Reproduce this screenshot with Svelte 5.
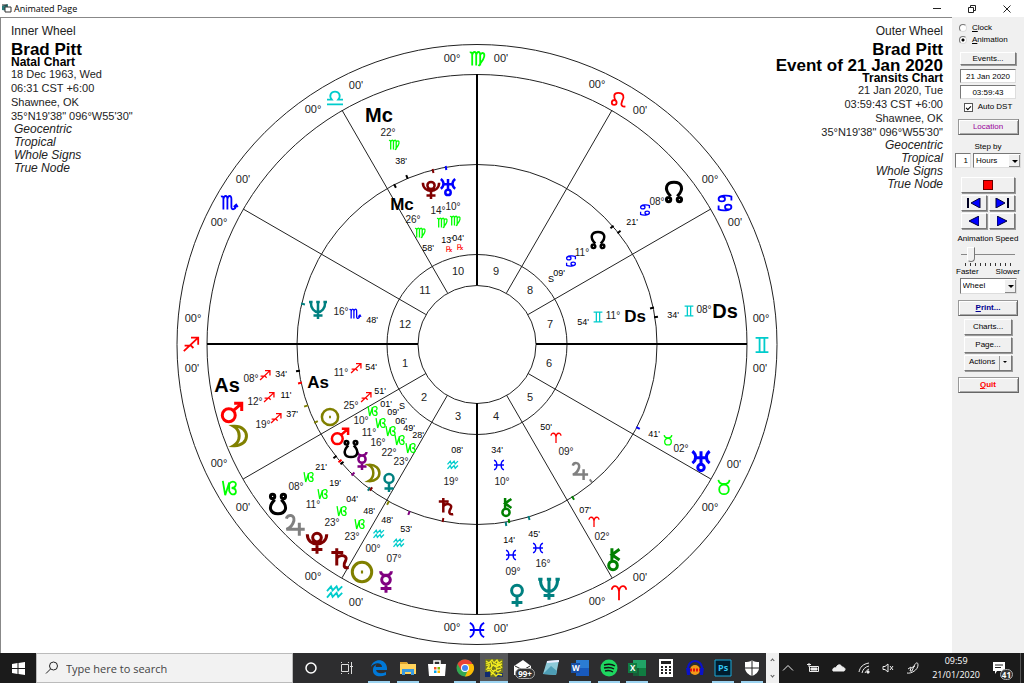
<script>
  // side panel state
  let mode = "animation";
  let date = "21 Jan 2020";
  let time = "03:59:43";
  let autoDst = true;
  let step = "1";
  let unit = "Hours";
  let speed = 14;
  let view = "Wheel";

  const CX = 477;
  const CY = 344;
  const rings = [300, 270, 180, 90, 59];

  const RED = "#ff0000";
  const LIME = "#00ff00";
  const AQUA = "#00cccc";
  const BLUE = "#0000ff";
  const TEAL = "#008080";
  const OLIVE = "#808000";
  const MAROON = "#800000";
  const PURPLE = "#800080";
  const GRAY = "#808080";
  const GREEN = "#008000";
  const BLACK = "#000000";

  // every glyph is drawn in a -10..10 box
  const glyphs = {
    aries: "M-9 -4C-9 -10 -1 -11 0 -2V9M9 -4C9 -10 1 -11 0 -2",
    taurus: "M-7 -9C-6 -2 6 -2 7 -9M6 3A6 6 0 1 1 -6 3A6 6 0 1 1 6 3",
    gemini: "M-8 -9H8M-8 9H8M-3 -9V9M3 -9V9",
    cancer: "M-8 -5C-8 -10 4 -10 8 -8V-3M-8 -5A4 3 0 1 0 0 -5A4 3 0 1 0 -8 -5M8 5C8 10 -4 10 -8 8V3M8 5A4 3 0 1 0 0 5A4 3 0 1 0 8 5",
    leo: "M-3 3A3 3 0 1 1 -9 3A3 3 0 1 1 -3 3M-4 1C-7 -4 -7 -9 -1 -9C6 -9 7 -4 4 1C2 6 3 9 8 8",
    virgo: "M-9 -8C-7 -9 -6 -8 -6 -5V8M-6 -5C-5 -10 -1 -10 -1 -5V8M-1 -5C0 -10 4 -10 4 -5V8M4 -5C6 -9 10 -8 9 -3C8 2 4 5 2 9",
    libra: "M-10 8H10M-10 2H-4C-8 -3 -5 -8 0 -8C5 -8 8 -3 4 2H10",
    scorpio: "M-10 -8C-8 -9 -7 -8 -7 -5V8M-7 -5C-6 -10 -2 -10 -2 -5V8M-2 -5C-1 -10 3 -10 3 -5V5C3 9 8 9 9 3M6 5L9 2L11 5",
    sagittarius: "M-9 9L9 -8M0 -8H9V1M-8 2H0L3 5",
    capricorn: "M-9 -9L-6 9L-1 -7V4M-1 -5C2 -10 9 -8 7 -3C6 0 3 0 2 0C9 0 9 9 3 8C1 8 0 6 -1 4",
    aquarius: "M-10 -1L-5 -7L-3 -2L2 -7L4 -2L9 -7M-10 7L-5 1L-3 6L2 1L4 6L9 1",
    pisces: "M-9 -9C-2 -6 -2 6 -9 9M9 -9C2 -6 2 6 9 9M-9 0H9",
    sun: "M9 0A9 9 0 1 1 -9 0A9 9 0 1 1 9 0M-1 0H1",
    moon: "M-6 -9C10 -10 10 10 -6 9C1 5 1 -5 -6 -9Z",
    mercury: "M4 -2A4 4 0 1 1 -4 -2A4 4 0 1 1 4 -2M-5 -10C-5 -5 5 -5 5 -10M0 2V10M-5 6H5",
    venus: "M5 -5A5 5 0 1 1 -5 -5A5 5 0 1 1 5 -5M0 0V10M-5 6H5",
    mars: "M3 3A6 6 0 1 1 -9 3A6 6 0 1 1 3 3M1 -1L9 -8M2 -8H9V-1",
    jupiter: "M-8 -6C-7 -10 0 -10 -1 -4C-2 0 -5 3 -8 4H9M4 -2V10",
    saturn: "M-3 -10V6M-8 -6H3M-3 -1C1 -5 8 -3 5 2C3 5 3 9 8 8",
    uranus: "M-8 -9C-4 -6 -4 -1 -8 2M8 -9C4 -6 4 -1 8 2M-5 -3H5M0 -9V3M3 6A3 3 0 1 1 -3 6A3 3 0 1 1 3 6",
    neptune: "M-8 -9C-8 6 8 6 8 -9M-10 -9H-6M6 -9H10M0 -9V10M-5 6H5M-2 -9H2",
    pluto: "M4 -5A4 4 0 1 1 -4 -5A4 4 0 1 1 4 -5M-9 -8C-9 4 9 4 9 -8M0 1V10M-5 6H5",
    chiron: "M4 6A4 4 0 1 1 -4 6A4 4 0 1 1 4 6M-1 -10V2M6 -9L-1 -4L6 1",
    node: "M-3 4C-10 -3 -7 -9 0 -9C7 -9 10 -3 3 4M-3 7A2 2 0 1 1 -7 7A2 2 0 1 1 -3 7M7 7A2 2 0 1 1 3 7A2 2 0 1 1 7 7",
    southnode: "M-3 -4C-10 3 -7 9 0 9C7 9 10 3 3 -4M-3 -7A2 2 0 1 1 -7 -7A2 2 0 1 1 -3 -7M7 -7A2 2 0 1 1 3 -7A2 2 0 1 1 7 -7"
  };

  const signColors = {
    aries: RED, leo: RED, sagittarius: RED,
    taurus: LIME, virgo: LIME, capricorn: LIME,
    gemini: AQUA, libra: AQUA, aquarius: AQUA,
    cancer: BLUE, scorpio: BLUE, pisces: BLUE
  };

  // sign, its place, the place of 00 degrees and of 00 minutes
  const cusps = [
    ["virgo", 477, 59, 452, 58, 501, 58],
    ["libra", 335, 98, 313, 109, 356, 85],
    ["scorpio", 229, 203, 219, 222, 243, 179],
    ["sagittarius", 191, 344, 193, 318, 192, 368],
    ["capricorn", 230, 488, 219, 463, 243, 507],
    ["aquarius", 335, 592, 313, 576, 356, 602],
    ["pisces", 477, 630, 452, 627, 501, 628],
    ["aries", 619, 593, 597, 601, 640, 577],
    ["taurus", 724, 487, 710, 507, 734, 464],
    ["gemini", 762, 345, 761, 318, 760, 368],
    ["cancer", 725, 203, 710, 179, 735, 222],
    ["leo", 619, 100, 597, 84, 640, 110]
  ];

  const houses = [
    [405, 363], [424, 397], [458, 416], [496, 416], [530, 397], [549, 363],
    [550, 324], [530, 290], [496, 271], [458, 271], [425, 290], [405, 324]
  ];

  // body, colour, x, y, degrees, x, y, sign, x, y, minutes, x, y
  const outer = [
    ["Mc", BLACK, 379, 115, "22", 388, 132, "virgo", 394, 145, "38", 401, 161],
    ["node", BLACK, 674, 192, "08", 657, 201, "cancer", 645, 210, "21", 632, 222],
    ["Ds", BLACK, 725, 311, "08", 704, 309, "gemini", 689, 311, "34", 673, 315],
    ["uranus", BLUE, 701, 461, "02", 681, 448, "taurus", 668, 440, "41", 654, 434],
    ["chiron", GREEN, 613, 559, "02", 602, 536, "aries", 594, 522, "07", 585, 510],
    ["neptune", TEAL, 549, 589, "16", 543, 563, "pisces", 538, 548, "45", 534, 534],
    ["venus", TEAL, 517, 596, "09", 513, 571, "pisces", 511, 555, "14", 509, 540],
    ["mercury", PURPLE, 386, 582, "07", 394, 558, "aquarius", 399, 543, "53", 406, 529],
    ["sun", OLIVE, 362, 572, "00", 373, 548, "aquarius", 379, 534, "48", 387, 520],
    ["saturn", MAROON, 340, 559, "23", 352, 536, "capricorn", 360, 524, "48", 369, 511],
    ["pluto", MAROON, 317, 543, "23", 332, 522, "capricorn", 342, 511, "04", 352, 499],
    ["jupiter", GRAY, 295, 525, "11", 313, 504, "capricorn", 323, 494, "19", 335, 483],
    ["southnode", BLACK, 278, 504, "08", 296, 486, "capricorn", 309, 477, "21", 321, 467],
    ["moon", OLIVE, 240, 436, "19", 263, 424, "sagittarius", 276, 418, "37", 292, 414],
    ["mars", RED, 232, 412, "12", 255, 401, "sagittarius", 269, 397, "11", 286, 395],
    ["As", BLACK, 227, 385, "08", 251, 378, "sagittarius", 265, 375, "34", 281, 374]
  ];

  const inner = [
    ["Mc", BLACK, 402, 203, "26", 413, 219, "virgo", 420, 233, "58", 428, 248],
    ["pluto", MAROON, 431, 190, "14", 438, 210, "virgo", 442, 223, "13", 447, 240],
    ["uranus", BLUE, 448, 187, "10", 453, 206, "virgo", 455, 221, "04", 458, 238],
    ["node", BLACK, 598, 240, "11", 582, 252, "cancer", 571, 261, "09", 559, 273],
    ["Ds", BLACK, 635, 315, "11", 613, 315, "gemini", 598, 317, "54", 583, 322],
    ["jupiter", GRAY, 580, 471, "09", 566, 451, "aries", 556, 438, "50", 546, 427],
    ["chiron", GREEN, 506, 507, "10", 502, 481, "pisces", 499, 465, "34", 497, 450],
    ["saturn", MAROON, 446, 507, "19", 451, 481, "aquarius", 453, 465, "08", 457, 450],
    ["venus", TEAL, 389, 483, "23", 401, 461, "capricorn", 411, 448, "28", 418, 435],
    ["moon", OLIVE, 374, 473, "22", 389, 452, "capricorn", 400, 440, "49", 409, 428],
    ["mercury", PURPLE, 362, 461, "16", 378, 442, "capricorn", 391, 431, "06", 401, 421],
    ["southnode", BLACK, 351, 449, "11", 369, 432, "capricorn", 381, 423, "09", 393, 412],
    ["mars", RED, 340, 436, "10", 361, 420, "capricorn", 373, 411, "01", 386, 404],
    ["sun", OLIVE, 330, 417, "25", 351, 405, "sagittarius", 366, 397, "51", 380, 391],
    ["As", BLACK, 318, 381, "11", 341, 372, "sagittarius", 356, 368, "54", 371, 367],
    ["neptune", TEAL, 318, 310, "16", 341, 311, "scorpio", 355, 314, "48", 372, 320]
  ];

  const wheels = [
    { name: "outer", bodies: outer, scale: 1.08 },
    { name: "inner", bodies: inner, scale: 0.9 }
  ];

  const marks = [
    [407, 177, BLACK], [395, 186, BLACK], [433, 171, MAROON], [446, 168, BLUE],
    [612, 227, BLACK], [619, 232, BLACK], [652, 308, BLACK], [656, 317, BLACK],
    [638, 428, BLUE], [591, 481, GRAY], [573, 498, GREEN], [529, 518, TEAL],
    [509, 521, GREEN], [506, 524, TEAL], [443, 520, MAROON], [409, 513, PURPLE],
    [388, 503, OLIVE], [369, 489, TEAL], [371, 489, MAROON], [353, 474, PURPLE],
    [340, 461, RED], [342, 463, BLACK], [335, 457, BLACK], [316, 422, OLIVE],
    [306, 406, OLIVE], [300, 383, RED], [298, 371, BLACK], [303, 304, TEAL]
  ];

  const spokes = [];
  for (let i = 0; i < 12; i++) {
    const a = (i * Math.PI) / 6;
    spokes.push({
      x1: CX + 59 * Math.cos(a),
      y1: CY + 59 * Math.sin(a),
      x2: CX + 270 * Math.cos(a),
      y2: CY + 270 * Math.sin(a),
      axis: i % 3 === 0
    });
  }

  const ticks = marks.map(([x, y, color]) => {
    const r = Math.hypot(x - CX, y - CY);
    const dx = ((x - CX) / r) * 2;
    const dy = ((y - CY) / r) * 2;
    return { x1: x - dx, y1: y - dy, x2: x + dx, y2: y + dy, color };
  });

  const apps = [
    { name: "Edge", open: true },
    { name: "Explorer", open: true },
    { name: "Store" },
    { name: "Chrome", open: true },
    { name: "Astrology", open: true, active: true },
    { name: "Mail" },
    { name: "Notes" },
    { name: "Word", open: true },
    { name: "Spotify", open: true },
    { name: "Excel", open: true },
    { name: "Calculator" },
    { name: "Audacity" },
    { name: "Photoshop", open: true },
    { name: "Security", open: true }
  ];
</script>

<div class="window">
  <header class="titlebar">
    <svg width="10" height="9" viewBox="0 0 10 9">
      <path d="M0 2L6 0V7L0 6Z" fill="#2a7a7a" />
      <path d="M3 3H9V8H3Z" fill="#fff" stroke="#333" />
      <path d="M0 1H5" stroke="#222" />
    </svg>
    <span class="caption">Animated Page</span>
    <div class="frame-buttons">
      <button aria-label="Minimize"><svg width="10" height="10"><path d="M1 4.500H9" /></svg></button>
      <button aria-label="Restore"><svg width="10" height="10"><path d="M1.500 3.500H6.500V8.500H1.500ZM3.500 3.500V1.500H8.500V6.500H6.500" /></svg></button>
      <button aria-label="Close"><svg width="10" height="10"><path d="M1.500 1.500L8.500 8.500M8.500 1.500L1.500 8.500" /></svg></button>
    </div>
  </header>

  <main>
    <section class="page">
      <div class="info">
        <p>Inner Wheel</p>
        <h2>Brad Pitt</h2>
        <h3>Natal Chart</h3>
        <p class="data">18 Dec 1963, Wed</p>
        <p class="data">06:31 CST +6:00</p>
        <p class="data">Shawnee, OK</p>
        <p class="data">35°N19'38" 096°W55'30"</p>
        <p class="setting">Geocentric</p>
        <p class="setting">Tropical</p>
        <p class="setting">Whole Signs</p>
        <p class="setting">True Node</p>
      </div>

      <svg class="wheel" viewBox="176 43 602 602">
        {#each rings as r}
          <circle class="ring" cx={CX} cy={CY + 0.5} {r} />
        {/each}
        {#each spokes as s}
          <line class="spoke" class:axis={s.axis} x1={s.x1} y1={s.y1} x2={s.x2} y2={s.y2} />
        {/each}
        {#each ticks as t}
          <line class="tick" x1={t.x1} y1={t.y1} x2={t.x2} y2={t.y2} stroke={t.color} />
        {/each}

        {#each cusps as [sign, x, y, dx, dy, mx, my]}
          <path class="sign" d={glyphs[sign]} transform="translate({x} {y}) scale(0.8)" stroke={signColors[sign]} />
          <text class="cusp" x={dx} y={dy + 4}>00°</text>
          <text class="cusp" x={mx} y={my + 4}>00'</text>
        {/each}

        {#each houses as [x, y], i}
          <text class="house" {x} y={y + 4}>{i + 1}</text>
        {/each}

        {#each wheels as wheel}
          {#each wheel.bodies as [body, color, x, y, deg, dx, dy, sign, sx, sy, min, mx, my]}
            {#if glyphs[body]}
              <path class="body {wheel.name}" d={glyphs[body]} transform="translate({x} {y}) scale({wheel.scale})" stroke={color} />
            {:else}
              <text class="angle {wheel.name}" {x} y={y + 7}>{body}</text>
            {/if}
            <text class="degree" x={dx} y={dy + 4}>{deg}°</text>
            <path class="small-sign" d={glyphs[sign]} transform="translate({sx} {sy}) scale(0.55)" stroke={signColors[sign]} />
            <text class="minute" x={mx} y={my + 3}>{min}'</text>
          {/each}
        {/each}

        <text class="retro" x="449" y="252">℞</text>
        <text class="retro" x="460" y="250">℞</text>
        <text class="minute" x="551" y="282">S</text>
        <text class="minute" x="402" y="409">S</text>
      </svg>

      <div class="info right">
        <p>Outer Wheel</p>
        <h2>Brad Pitt</h2>
        <h2>Event of 21 Jan 2020</h2>
        <h3>Transits Chart</h3>
        <p class="data">21 Jan 2020, Tue</p>
        <p class="data">03:59:43 CST +6:00</p>
        <p class="data">Shawnee, OK</p>
        <p class="data">35°N19'38" 096°W55'30"</p>
        <p class="setting">Geocentric</p>
        <p class="setting">Tropical</p>
        <p class="setting">Whole Signs</p>
        <p class="setting">True Node</p>
      </div>
    </section>

    <aside>
      <div class="modes">
        <label><input type="radio" bind:group={mode} value="clock" /><span><u>C</u>lock</span></label>
        <label><input type="radio" bind:group={mode} value="animation" /><span><u>A</u>nimation</span></label>
      </div>
      <button class="events">Events...</button>
      <div class="moment">
        <input type="text" aria-label="Date" bind:value={date} />
        <input type="text" aria-label="Time" bind:value={time} />
      </div>
      <label class="dst"><input type="checkbox" bind:checked={autoDst} /><span>Auto DST</span></label>
      <button class="location framed">Location</button>
      <label class="step-label" for="step">Step by</label>
      <div class="step">
        <input id="step" type="text" bind:value={step} />
        <div class="select">
          <select aria-label="Step unit" bind:value={unit}>
            <option>Hours</option>
            <option>Days</option>
          </select>
          <span class="drop"></span>
        </div>
      </div>

      <div class="player">
        <button class="stop" aria-label="Stop"><svg width="10" height="10"><rect x="0.500" y="0.500" width="9" height="9" fill="#f00" stroke="#600" /></svg></button>
        <button aria-label="First"><svg width="14" height="10"><path d="M1 0V10" stroke="#002" stroke-width="2" /><path d="M13 0V10L4 5Z" fill="#00f" stroke="#003" /></svg></button>
        <button aria-label="Last"><svg width="14" height="10"><path d="M13 0V10" stroke="#002" stroke-width="2" /><path d="M1 0V10L10 5Z" fill="#00f" stroke="#003" /></svg></button>
        <button aria-label="Backward"><svg width="10" height="10"><path d="M10 0V10L0 5Z" fill="#00f" stroke="#003" /></svg></button>
        <button aria-label="Forward"><svg width="10" height="10"><path d="M0 0V10L10 5Z" fill="#00f" stroke="#003" /></svg></button>
      </div>

      <label class="speed-label" for="speed">Animation Speed</label>
      <input id="speed" class="speed" type="range" min="0" max="100" bind:value={speed} />
      <div class="notches"></div>
      <div class="ends"><span>Faster</span><span>Slower</span></div>
      <div class="select view">
        <select aria-label="View" bind:value={view}>
          <option>Wheel</option>
          <option>Page</option>
        </select>
        <span class="drop"></span>
      </div>

      <button class="print framed"><u>P</u>rint...</button>
      <div class="menu">
        <button>Charts...</button>
        <button>Page...</button>
        <button class="actions"><span>Actions</span><i></i></button>
      </div>
      <button class="quit framed"><u>Q</u>uit</button>
    </aside>
  </main>

  <footer>
    <button class="start" aria-label="Start">
      <svg width="13" height="13" viewBox="0 0 13 13" fill="#fff">
        <path d="M0 2L5.500 1V6H0ZM6.500 1L13 0V6H6.500ZM0 7H5.500V12L0 11ZM6.500 7H13V13L6.500 12Z" />
      </svg>
    </button>
    <label class="search">
      <svg width="14" height="14" viewBox="0 0 14 14" fill="none" stroke="#222">
        <circle cx="8.500" cy="5" r="4" /><path d="M5.500 8L1 12.500" />
      </svg>
      <input type="text" placeholder="Type here to search" />
    </label>
    <nav>
      <button class="wide" aria-label="Cortana"><svg width="16" height="16"><circle cx="8" cy="8" r="5" fill="none" stroke="#fff" stroke-width="1.500" /></svg></button>
      <button class="wide" aria-label="Task view">
        <svg width="16" height="16" fill="none" stroke="#ddd"><path d="M2.500 4.500H9.500V11.500H2.500ZM2.500 2V3M9.500 2V3M2.500 13V14M9.500 13V14M12.500 2V14M11 6.500H14" /></svg>
      </button>
      {#each apps as app}
        <button class:open={app.open} class:active={app.active} aria-label={app.name}>
          <svg width="18" height="18" viewBox="0 0 18 18">
            {#if app.name === "Edge"}
              <path d="M1 8C3 -1 16 -1 17 9V11H6C7 15 12 15 16 13V16C9 19 2 17 3 10C3 8 5 6 7 5C6 6 5 7 6 8H12C12 3 4 3 1 8Z" fill="#0078d7" />
            {:else if app.name === "Explorer"}
              <path d="M1 3H8L9 5H17V15H1Z" fill="#ffd35c" /><path d="M1 3H8V5H1Z" fill="#dca32c" /><path d="M3 16V10H15V16H12V13H6V16Z" fill="#3a9be0" />
            {:else if app.name === "Store"}
              <path d="M0 5H18L17 17H1Z" fill="#fff" /><path d="M6 6V2H12V6" fill="none" stroke="#fff" stroke-width="1.500" />
              <path d="M6 8H8.500V10.500H6Z" fill="#f25022" /><path d="M9.500 8H12V10.500H9.500Z" fill="#7fba00" /><path d="M6 11.500H8.500V14H6Z" fill="#00a4ef" /><path d="M9.500 11.500H12V14H9.500Z" fill="#ffb900" />
            {:else if app.name === "Chrome"}
              <circle cx="9" cy="9" r="8.500" fill="#33a852" /><path d="M1.500 5A8.500 8.500 0 0 1 17 6H9L5 11Z" fill="#ea4335" /><path d="M9 5H17A8.500 8.500 0 0 1 9 17.500L12 11Z" fill="#fbbc05" />
              <circle cx="9" cy="9" r="4" fill="#fff" /><circle cx="9" cy="9" r="3" fill="#4285f4" />
            {:else if app.name === "Astrology"}
              <path d="M0 0H18V18H0Z" fill="#6f7424" /><path d="M0 13H5V18H0Z" fill="#102a70" /><path d="M11 14H18V18H11Z" fill="#223768" />
              <path d="M1 2L4 4L7 1L9 4L12 1L14 4L17 2M1 6L4 7L2 10L6 9L8 6L11 8L15 6L17 9M2 12L5 11L7 14L10 11L13 13L16 11M6 16L8 14L11 17L13 15L17 16M6 3L7 7M13 3L12 7M1 4L5 6M10 4L13 6L17 5M11 10L16 9" fill="none" stroke="#f3ec20" stroke-width="1.300" />
              <circle cx="9" cy="9" r="3" fill="none" stroke="#f3ec20" />
            {:else if app.name === "Mail"}
              <path d="M0 7L9 1L17 7V16H0Z" fill="#fff" /><path d="M1 7L9 11L16 7" fill="none" stroke="#222" />
            {:else if app.name === "Notes"}
              <path d="M5 2L17 1L14 16L1 15Z" fill="#8cc9d8" /><path d="M1 15L9 7L15 12L14 16Z" fill="#4d9db5" /><path d="M5 2L17 1V3L5 4Z" fill="#eef" />
            {:else if app.name === "Word"}
              <path d="M5 1H18V17H5Z" fill="#2b7cd3" /><path d="M5 9H18V17H5Z" fill="#185abd" /><path d="M0 4H9V14H0Z" fill="#174ea6" /><text x="1" y="12">W</text>
            {:else if app.name === "Spotify"}
              <circle cx="9" cy="9" r="8.500" fill="#1ed760" /><path d="M4 6C8 5 12 5 15 7M4 9C8 8 11 8 14 10M5 12C8 11 10 11 13 13" fill="none" stroke="#111" stroke-width="1.500" />
            {:else if app.name === "Excel"}
              <path d="M5 1H18V17H5Z" fill="#21a366" /><path d="M11 9H18V17H11Z" fill="#107c41" /><path d="M5 9H11V17H5Z" fill="#185c37" /><path d="M0 4H9V14H0Z" fill="#107c41" /><text x="2" y="12">X</text>
            {:else if app.name === "Calculator"}
              <path d="M2 0H16V18H2Z" fill="#fff" /><path d="M4 2H14V5H4Z" fill="#222" /><path d="M4 8H14M4 11H14M4 14H14" stroke="#222" stroke-width="2" stroke-dasharray="2 2" />
            {:else if app.name === "Audacity"}
              <circle cx="9" cy="11" r="5" fill="#f39a18" /><path d="M4 11H14" stroke="#e01010" stroke-width="3" stroke-dasharray="2 1" />
              <path d="M2 11C1 -1 17 -1 16 11" fill="none" stroke="#0b12c8" stroke-width="2" /><path d="M0 9H4V16H1ZM14 9H18L17 16H14Z" fill="#0b12c8" />
            {:else if app.name === "Photoshop"}
              <path d="M1 1H17V17H1Z" fill="#001d2e" stroke="#1aa9d8" /><text class="ps" x="4" y="12">Ps</text>
            {:else}
              <path d="M9 1C11 3 14 3 16 3V9C16 13 12 16 9 17C6 16 2 13 2 9V3C4 3 7 3 9 1Z" fill="#fff" /><path d="M9 1V17M2 9H16" stroke="#222" />
            {/if}
          </svg>
          {#if app.name === "Mail"}<span class="badge">99+</span>{/if}
        </button>
      {/each}
    </nav>
    <div class="scroller"><i class="up"></i><i></i></div>
    <div class="tray">
      <svg width="12" height="12"><path d="M1 8.500L6 3.500L11 8.500" /></svg>
      <svg width="14" height="12"><path d="M3.500 4.500H12.500V9.500H3.500ZM1 2.500H5M3 1V5" /><path d="M5 6H11V8H5Z" fill="#eee" /></svg>
      <svg width="14" height="12"><path d="M1 9C0 7 2 5 4 6C5 2 9 2 10 5C13 5 14 8 12 9Z" fill="#eee" /></svg>
      <svg width="12" height="12"><path d="M1 10C2 5 5 2 11 1M4 11C5 7 7 5 11 4M7 11C8 9 9 8 11 7" /><path d="M9 9H11V11H9Z" fill="#eee" /></svg>
      <svg width="12" height="12"><path d="M1 4.500H3L6 2V10L3 7.500H1ZM8 4L11 8M11 4L8 8" /></svg>
      <svg width="14" height="14"><path d="M1 12C5 13 12 9 12 4C12 1 10 1 8 5L6 10L4 10L5 7L9 5M2 8L5 6" /></svg>
      <div class="clock"><span>09:59</span><span>21/01/2020</span></div>
      <div class="notice">
        <svg width="14" height="14"><path d="M1 1H13V10H5L3 13V10H1Z" fill="#fff" stroke="none" /><path d="M3 4H11M3 6.500H9" stroke="#222" /></svg>
        <span class="badge">41</span>
      </div>
    </div>
  </footer>
</div>

<style>
  :global(body) {
    margin: 0;
    background: #fff;
  }

  .window {
    display: flex;
    flex-direction: column;
    min-height: 100vh;
    font-family: "Liberation Sans", Arial, sans-serif;
    color: #000;
  }

  p, h2, h3 {
    margin: 0;
  }

  button, input, select {
    box-sizing: border-box;
    margin: 0;
    padding: 0;
    font: inherit;
    color: inherit;
    border-radius: 0;
  }

  .titlebar {
    display: flex;
    align-items: center;
    gap: 2px;
    height: 17px;
    padding-left: 2px;
  }

  .caption {
    flex: 1;
    font: 9px/16px "Open Sans", sans-serif;
  }

  .frame-buttons {
    display: flex;
  }

  .frame-buttons button {
    width: 35px;
    height: 16px;
    border: 0;
    background: none;
    line-height: 0;
  }

  .frame-buttons path {
    fill: none;
    stroke: #222;
  }

  main {
    flex: 1;
    display: grid;
    grid-template-columns: minmax(0, 1fr) 72px;
  }

  .page {
    display: grid;
    grid-template-columns: minmax(0, 1fr) minmax(0, 602px) minmax(0, 1fr);
    align-items: start;
    padding: 6px 9px 8px 10px;
    border-left: 1px solid #888;
    border-top: 1px solid #888;
  }

  .info {
    display: flex;
    flex-direction: column;
    align-items: flex-start;
    white-space: nowrap;
    font-size: 12px;
    line-height: 14px;
    color: #222;
  }

  .right {
    align-items: flex-end;
  }

  h2 {
    font-size: 17px;
    line-height: 16px;
    color: #000;
  }

  .info h2 {
    padding-top: 4px;
  }

  .right h2 + h2 {
    padding-top: 0;
  }

  h3 {
    font-size: 12px;
    line-height: 9px;
    color: #000;
  }

  .data {
    font-size: 11px;
  }

  .setting {
    font-style: italic;
    line-height: 13px;
    padding-left: 3px;
  }

  .wheel {
    width: 100%;
    margin-top: 19px;
  }

  .ring, .spoke {
    fill: none;
    stroke: #222;
    stroke-width: 1;
  }

  .axis {
    stroke: #000;
    stroke-width: 2;
  }

  .tick {
    stroke-width: 2;
  }

  .wheel path {
    fill: none;
    vector-effect: non-scaling-stroke;
  }

  .wheel text {
    text-anchor: middle;
  }

  .sign {
    stroke-width: 1.800;
  }

  .small-sign {
    stroke-width: 1.300;
  }

  .body {
    stroke-width: 3;
  }

  .body.inner {
    stroke-width: 2.500;
  }

  .cusp, .house {
    font-size: 11px;
    fill: #222;
  }

  .degree {
    font-size: 10px;
    fill: #222;
  }

  .minute {
    font-size: 9px;
  }

  .angle {
    font-size: 20px;
    font-weight: bold;
  }

  .angle.inner {
    font-size: 17px;
  }

  .retro {
    font: 8px "DejaVu Sans", sans-serif;
    fill: #f00;
  }

  aside {
    display: flex;
    flex-direction: column;
    align-items: center;
    padding-top: 5px;
    background: #f0f0f0;
    font-size: 8px;
    line-height: 12px;
    white-space: nowrap;
  }

  aside label {
    display: flex;
    align-items: center;
    gap: 5px;
  }

  .modes {
    width: 58px;
  }

  input[type="radio"], input[type="checkbox"] {
    appearance: none;
    width: 8px;
    height: 8px;
    border: 1px solid #777;
    border-right-color: #ddd;
    border-bottom-color: #ddd;
    background: #fff;
  }

  input[type="radio"] {
    border-radius: 50%;
  }

  input[type="radio"]:checked {
    background: radial-gradient(#000 0 1px, #fff 2px);
  }

  input[type="checkbox"] {
    display: grid;
    place-items: center;
    width: 9px;
    height: 9px;
    border-color: #555;
  }

  /* tick is the corner of a turned box */
  input[type="checkbox"]:checked::before {
    content: "";
    width: 2px;
    height: 4px;
    border: solid #000;
    border-width: 0 1px 1px 0;
    transform: rotate(45deg);
  }

  aside button {
    height: 16px;
    border: 1px solid;
    border-color: #fff #777 #777 #fff;
    background: #f0f0f0;
    box-shadow: 1px 1px 0 #999;
    line-height: 12px;
  }

  aside .framed {
    border-color: #999 #666 #666 #999;
    box-shadow: inset 1px 1px 0 #fff, inset -1px -1px 0 #aaa;
  }

  aside .events {
    width: 56px;
    height: 13px;
    margin-top: 6px;
    line-height: 10px;
  }

  .moment {
    display: flex;
    flex-direction: column;
    gap: 2px;
    margin: 4px 0 2px;
  }

  aside input[type="text"], select {
    border: 1px solid;
    border-color: #777 #ddd #ddd #777;
    background: #fff;
  }

  .moment input {
    width: 56px;
    height: 14px;
    text-align: center;
  }

  .location {
    width: 61px;
    margin-top: 6px;
    color: #909;
  }

  .step-label {
    margin-top: 6px;
  }

  .step {
    display: flex;
    gap: 2px;
  }

  .step input {
    width: 16px;
    height: 15px;
    text-align: right;
    padding-right: 2px;
  }

  .select {
    display: flex;
    width: 48px;
    height: 15px;
    position: relative;
  }

  select {
    appearance: none;
    width: 100%;
    padding-left: 2px;
  }

  .drop {
    position: absolute;
    top: 2px;
    right: 1px;
    bottom: 1px;
    width: 11px;
    background: #f0f0f0;
    box-shadow: inset -1px -1px 0 #888;
    pointer-events: none;
  }

  .drop::after, .actions i::after {
    content: "";
    position: absolute;
    top: 5px;
    left: 3px;
    border: 3px solid transparent;
    border-top-color: #000;
    border-bottom: 0;
  }

  .player {
    display: grid;
    grid-template-columns: 26px 26px;
    gap: 2px;
    margin-top: 9px;
  }

  .player button {
    line-height: 0;
  }

  .player .stop {
    grid-column: span 2;
  }

  .speed-label {
    margin-top: 4px;
  }

  .speed {
    appearance: none;
    width: 54px;
    height: 18px;
    background: linear-gradient(#888, #888) center / 100% 1px no-repeat;
  }

  .speed::-webkit-slider-thumb {
    appearance: none;
    width: 8px;
    height: 15px;
    background: #f0f0f0;
    border: 1px solid;
    border-color: #fff #777 #777 #fff;
    border-radius: 0 0 4px 4px;
  }

  .notches {
    width: 46px;
    height: 3px;
    background: repeating-linear-gradient(90deg, #333 0 1px, transparent 1px 5px);
  }

  .ends {
    display: flex;
    justify-content: space-between;
    width: 64px;
  }

  .view {
    width: 57px;
    height: 16px;
  }

  .print {
    width: 60px;
    margin-top: 6px;
    font-weight: bold;
    color: #000090;
  }

  .menu {
    display: flex;
    flex-direction: column;
    gap: 2px;
    margin: 3px 0 6px;
  }

  .menu button {
    width: 48px;
  }

  .menu .actions {
    display: flex;
    justify-content: space-between;
    padding-left: 4px;
  }

  .actions i {
    position: relative;
    width: 11px;
    height: 14px;
    border-left: 1px solid #999;
  }

  .actions i::after {
    border-width: 2px;
    border-bottom: 0;
  }

  .quit {
    width: 61px;
    font-weight: bold;
    color: #f00;
  }

  footer {
    display: grid;
    grid-template-columns: 36px minmax(0, 257px) minmax(0, 1fr) 13px auto;
    height: 30px;
    background: #2d2d2f;
    font-family: "Open Sans", sans-serif;
    color: #fff;
  }

  footer button {
    border: 0;
    background: none;
    line-height: 0;
  }

  footer .start {
    background: #1b1b1b;
  }

  .search {
    display: flex;
    align-items: center;
    gap: 7px;
    padding-left: 9px;
    background: #f2f2f2;
    box-shadow: inset 0 0 0 1px #bbb;
  }

  .search input {
    flex: 1;
    border: 0;
    background: none;
    font-size: 11px;
  }

  .search input::placeholder {
    color: #444;
    opacity: 1;
  }

  nav {
    display: flex;
  }

  nav button {
    flex: 1;
    position: relative;
    display: flex;
    align-items: center;
    justify-content: center;
  }

  nav .wide {
    flex: 0 0 36px;
  }

  .open {
    background: linear-gradient(#9cd3f0, #9cd3f0) bottom / 22px 2px no-repeat;
  }

  nav .active {
    background-color: #57585a;
    background-size: 100% 2px;
  }

  nav text {
    font: bold 8px "Open Sans", sans-serif;
    fill: #fff;
  }

  nav .ps {
    font-size: 9px;
    fill: #31c5f0;
  }

  .badge {
    position: absolute;
    right: 2px;
    bottom: 4px;
    padding: 0 2px;
    border: 1px solid #aaa;
    border-radius: 8px;
    background: #333;
    font-size: 8px;
    font-weight: bold;
    line-height: 9px;
    color: #fff;
  }

  .scroller {
    display: flex;
    flex-direction: column;
    justify-content: space-between;
    align-items: center;
    padding: 6px 0;
    background: #f0f0f0;
  }

  .scroller i {
    width: 2px;
    height: 2px;
    border: solid #555;
    border-width: 0 1px 1px 0;
    transform: rotate(45deg);
  }

  .scroller .up {
    transform: rotate(225deg);
  }

  .tray {
    display: flex;
    align-items: center;
    gap: 12px;
    padding: 0 4px 0 3px;
    background: #1b1b1b;
    box-shadow: inset -3px 0 0 #1b1b1b, inset -4px 0 0 #555;
  }

  .tray svg {
    fill: none;
    stroke: #eee;
  }

  .clock {
    display: flex;
    flex-direction: column;
    align-items: center;
    font-size: 9px;
    line-height: 14px;
  }

  .notice {
    position: relative;
    width: 28px;
    line-height: 0;
  }

  .notice .badge {
    right: 7px;
    bottom: -5px;
    padding: 0 1px;
  }
</style>
